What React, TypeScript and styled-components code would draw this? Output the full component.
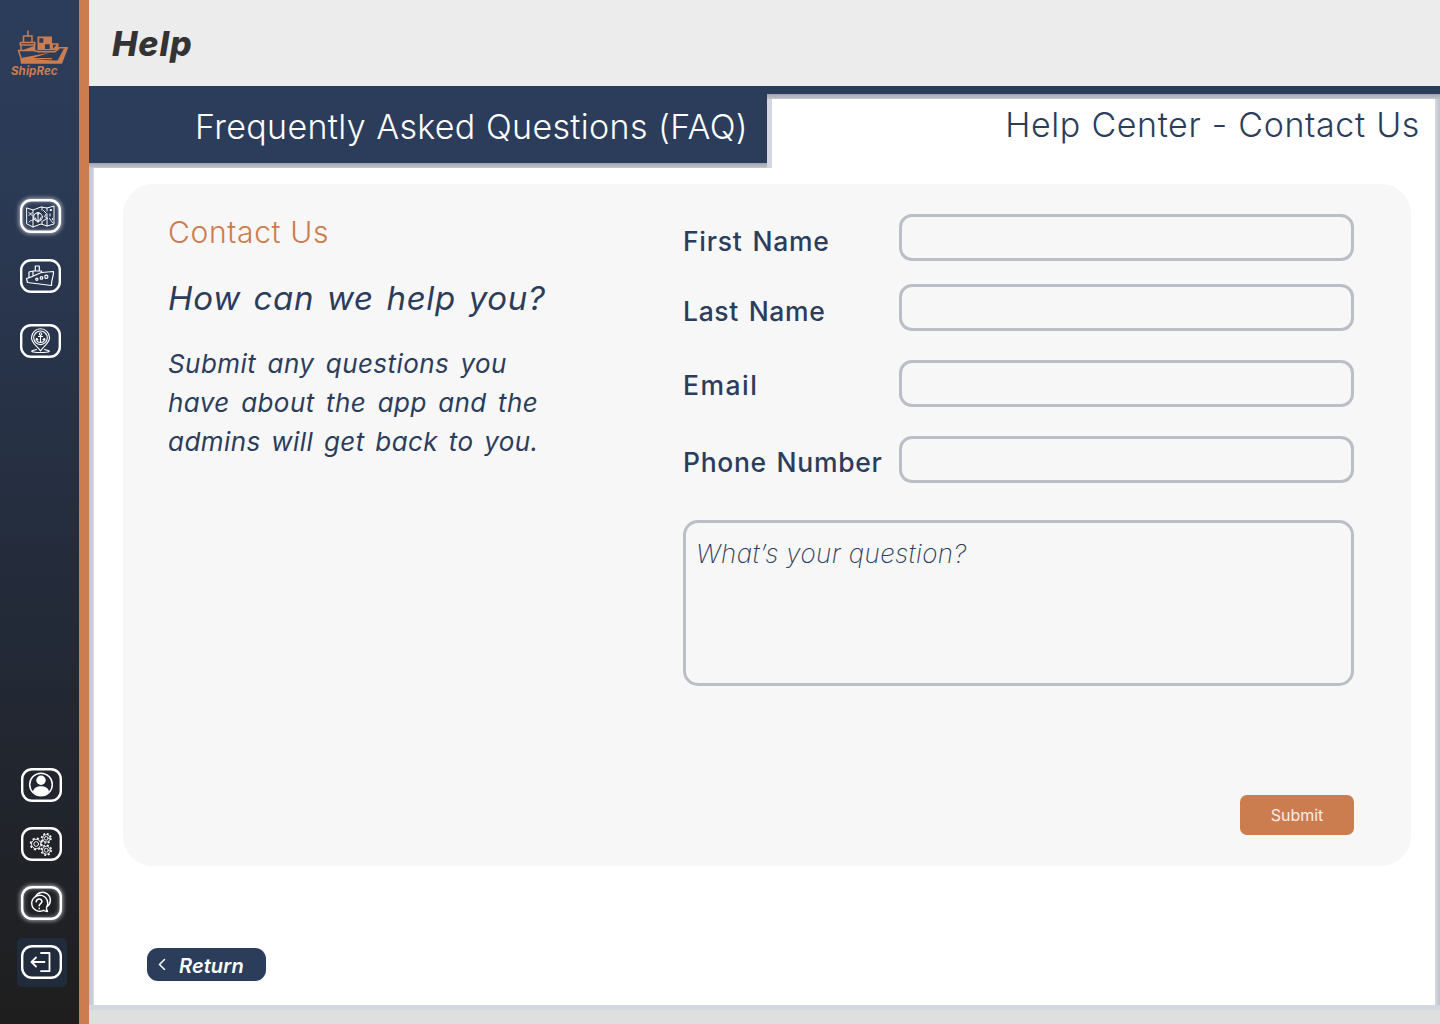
import React from 'react';
import styled, { createGlobalStyle, css } from 'styled-components';

const navy = '#2c3d5b';
const copper = '#cc7d50';
const edge = '#d4d7df';
const sans = "Inter, 'Liberation Sans', sans-serif";

const Global = createGlobalStyle`
  *, *::before, *::after { box-sizing: border-box; }
  body { margin: 0; font-family: ${sans}; color: ${navy}; }
  button, input, textarea { font-family: inherit; }
`;

const Page = styled.div`
  display: flex;
  width: 1440px;
  height: 1024px;
  overflow: hidden;
  background: #dfdfdf;
`;

const Sidebar = styled.nav`
  display: flex;
  flex-direction: column;
  flex: none;
  width: 89px;
  padding: 29px 10px 37px 11px;
  border-right: 10px solid ${copper};
  background: linear-gradient(180deg, #2c3d5b 0%, #2b3a55 18%, #232a38 60%, #1e1e1e 100%);
`;

const Brand = styled.div`
  width: 60px;
  height: 50px;
  color: ${copper};
  svg { display: block; margin-left: 6px; }
`;

const BrandName = styled.div`
  margin-top: -1px;
  font-size: 11.5px;
  line-height: 12px;
  font-weight: 700;
  font-style: italic;
  letter-spacing: 0.1px;
`;

const NavGroup = styled.div<{ $lower?: boolean }>`
  display: flex;
  flex-direction: column;
  align-items: flex-start;
  padding-left: ${p => (p.$lower ? 6 : 5)}px;
  ${p => (p.$lower ? 'margin-top: auto;' : 'margin-top: 116px;')}
`;

const NavButton = styled.button<{ $glow?: boolean; $gap?: number }>`
  display: flex;
  align-items: center;
  justify-content: center;
  width: 48px;
  height: 42px;
  padding: 0;
  margin: 0 0 ${p => p.$gap ?? 17}px;
  border: 0;
  background: none;
  color: #fff;
  span {
    display: flex;
    align-items: center;
    justify-content: center;
    width: 41px;
    height: 34px;
    border-radius: 11px;
    box-shadow: inset 0 0 0 2.4px #fff${p => p.$glow && css`, 0 0 4px 1px rgba(255, 255, 255, 0.6), inset 0 0 5px 2px rgba(255, 255, 255, 0.6)`};
  }
`;

const LogoutButton = styled(NavButton)`
  width: 50px;
  height: 49px;
  margin: -3px 0 0 0;
  padding: 0 2px 2px 0;
  border-radius: 5px;
  background: #212b3b;
`;

const Main = styled.main`
  display: flex;
  flex-direction: column;
  width: 1351px;
`;

const Header = styled.header`
  display: flex;
  align-items: center;
  height: 86px;
  padding: 1px 0 0 23px;
  background: #ececec;
`;

const Title = styled.h1`
  margin: 0;
  font-size: 34px;
  line-height: 40px;
  font-weight: 800;
  font-style: italic;
  letter-spacing: 0.9px;
  color: #333;
`;

const Tabs = styled.div`
  display: flex;
  height: 82px;
  border-top: 8px solid ${navy};
`;

const Tab = styled.button<{ $active?: boolean; $spacing: number }>`
  padding: 0;
  border: 0;
  font-size: 34px;
  line-height: 40px;
  font-weight: 300;
  text-align: right;
  white-space: nowrap;
  letter-spacing: ${p => p.$spacing}px;
  word-spacing: 0.4px;
  ${p =>
    p.$active
      ? css`
          flex: 1;
          padding: 11px 20px 23px 0;
          color: ${navy};
          background:
            linear-gradient(180deg, #a0a3ad, #c3c6cf) top / 100% 5px no-repeat,
            linear-gradient(${edge}, ${edge}) left / 5px 100% no-repeat,
            linear-gradient(90deg, #d6d9e1, #bfc2cb) right / 5px 100% no-repeat,
            #fff;
        `
      : css`
          width: 678px;
          height: 74px;
          padding: 0 19px 8px 0;
          color: #fff;
          background: linear-gradient(180deg, ${navy} 69px, #9fa3ac 69px, #c3c6ce 74px);
        `}
`;

const Content = styled.section`
  display: flex;
  flex-direction: column;
  align-items: flex-start;
  height: 842px;
  padding: 16px 24px 0 34px;
  background:
    linear-gradient(${edge}, ${edge}) bottom / 100% 5px no-repeat,
    linear-gradient(90deg, #bfc2cb, #d6d9e1) left / 5px 100% no-repeat,
    linear-gradient(90deg, #d6d9e1, #bfc2cb) right / 5px 100% no-repeat,
    #fff;
`;

const Card = styled.div`
  display: flex;
  width: 1288px;
  height: 682px;
  padding: 30px 57px 0 45px;
  border-radius: 30px;
  background: #f7f7f7;
`;

const Intro = styled.div`
  width: 515px;
  white-space: nowrap;
`;

const Eyebrow = styled.h2`
  margin: -2px 0 0;
  font-size: 30px;
  line-height: 40px;
  font-weight: 300;
  letter-spacing: 0.65px;
  color: ${copper};
`;

const Question = styled.h3`
  margin: 25px 0;
  font-size: 33px;
  line-height: 42px;
  font-weight: 400;
  font-style: italic;
  letter-spacing: 0.7px;
  word-spacing: 2.7px;
`;

const Line = styled.div<{ $word?: number }>`
  font-size: 26px;
  line-height: 39px;
  font-style: italic;
  font-weight: 400;
  letter-spacing: 0.42px;
  word-spacing: ${p => p.$word ?? 3.7}px;
`;

const Form = styled.form`
  display: flex;
  flex-direction: column;
  width: 671px;
`;

const Field = styled.label<{ $gap: number; $shift: number; $spacing: number }>`
  display: flex;
  justify-content: space-between;
  height: 47px;
  margin-bottom: ${p => p.$gap}px;
  font-size: 26.5px;
  line-height: 47px;
  font-weight: 500;
  letter-spacing: ${p => p.$spacing}px;
  word-spacing: 2px;
  white-space: nowrap;
  span { padding-top: ${p => p.$shift}px; }
`;

const Input = styled.input`
  width: 455px;
  height: 47px;
  border: 3px solid #babec7;
  border-radius: 13px;
  background: transparent;
`;

const Message = styled.textarea`
  height: 166px;
  padding: 11px 10px;
  border: 3px solid #babec7;
  border-radius: 15px;
  background: transparent;
  resize: none;
  font-size: 26px;
  line-height: 40px;
  font-weight: 200;
  font-style: italic;
  letter-spacing: 0.38px;
  &::placeholder { color: ${navy}; opacity: 1; }
`;

const Submit = styled.button`
  align-self: flex-end;
  width: 114px;
  height: 40px;
  margin-top: 109px;
  padding: 0;
  border: 0;
  border-radius: 7px;
  background: ${copper};
  color: #f7ece5;
  font-size: 16px;
`;

const Return = styled.button`
  display: flex;
  align-items: center;
  width: 119px;
  height: 33px;
  margin: 82px 0 0 24px;
  padding: 2px 0 0 11px;
  border: 0;
  border-radius: 11px;
  background: ${navy};
  color: #fff;
  font-size: 20px;
  font-weight: 600;
  font-style: italic;
  letter-spacing: 0.1px;
  svg { margin: -3px 13px 0 0; }
`;

const Icon = ({ w, h, sw = 1, children }: { w: number; h: number; sw?: number; children: React.ReactNode }) => (
  <svg width={w} height={h} viewBox={`0 0 ${w} ${h}`} fill="none" stroke="currentColor" strokeWidth={sw} strokeLinecap="round" strokeLinejoin="round">
    {children}
  </svg>
);

const LogoShip = () => (
  <Icon w={52} h={37} sw={1.5}>
    <path d="M1.500 21.500h15l5 1.200h16.500l4.300-3.900h8L44.500 34H4.500L4 29z" />
    <path d="M3.500 29H35v1.200H16L37 31.500h3.500L47 19.500l3.500-.7L44.500 34H4.500z" fill="currentColor" stroke="none" />
    <path d="M33 23.500L16 29H4z" fill="currentColor" stroke="none" />
    <path d="M3.300 16v-2.600h14.500V16zM4 16v5M17.500 16v5M6.500 13.200V7h8.500v6.200M11 7V2" />
    <path d="M6 21l11-4v4z" fill="currentColor" stroke="none" />
    <path fillRule="evenodd" d="M20.500 7.500h14.500v6.700h6.500v7h-21zM22.300 9.300v4.400h4V9.300zM28 15.300v4.700h4.700v-4.700zM36 15.700v4l3.600-4z" fill="currentColor" stroke="none" />
  </Icon>
);

const MapIcon = () => (
  <Icon w={29} h={23} sw={1}>
    <path d="M1 3l6 2 8-3 6 1 7-2v18l-7 2-6-2-8 3-6-3zM7 5v17M16 2v3M21 3v3M16 16v3M21 9v12" />
    <circle cx="12" cy="12" r="4.300" />
    <circle cx="12" cy="8.500" r="1" />
    <path d="M12 9.500v8M9.500 13c0 4 5 4 5 0M3 7.500l3 3M6 7.500l-3 3M3 17c2-3 4 0 5-4M17.500 5.500l3 3-2 3 3 2M17 16l3-2M24.500 4.500h1v1h-1zM24 9v2M23.500 13.500l3 4M26.500 13.500v1" />
  </Icon>
);

const ShipIcon = () => (
  <Icon w={30} h={24} sw={1.2}>
    <path d="M1.500 14.500c6-1 10-4.500 15-6l12-1c.5 4-2.500 8.500-2 14L2.500 18.500zM4 13.500V8l4-1v5M8 7h8.500v1.500M10.300 7V2h4v5" />
    <circle cx="11.800" cy="15.300" r="1.100" /><circle cx="16.500" cy="13.900" r="1.300" /><circle cx="21.300" cy="12.800" r="1.600" />
  </Icon>
);

const PortIcon = () => (
  <Icon w={21} h={26} sw={1.1}>
    <path d="M10.500 23C8 18.500 1.500 15.500 1.500 9.800a9 9 0 0 1 18 0c0 5.700-6.500 8.700-9 13.200z" />
    <circle cx="10.500" cy="9.800" r="6.800" />
    <circle cx="10.500" cy="6" r="1.200" />
    <path d="M10.500 7.200v7.300M8.500 8.500h4M6.500 10.500c0 5.300 8 5.300 8 0M6 12l.5-1.500 1.500 1M15 12l-.5-1.500-1.500 1M6.500 21.500c-9 2-4 3 4 3s13-1 4-3" />
  </Icon>
);

const UserIcon = () => (
  <Icon w={26} h={26} sw={1.5}>
    <circle cx="13" cy="12.500" r="11.300" />
    <circle cx="13" cy="8.300" r="4.700" fill="currentColor" stroke="none" />
    <path d="M5 19.500c1-7 15-7 16 0-4 5-12 5-16 0z" fill="currentColor" stroke="none" />
  </Icon>
);

const Gear = ({ x, y, r }: { x: number; y: number; r: number }) => (
  <g transform={`translate(${x} ${y})`}>
    <circle r={r} />
    <circle r={r * 0.5} />
    <circle r={r + 1} strokeWidth="1.500" strokeLinecap="butt" strokeDasharray={`${(r + 1) * 0.3927} ${(r + 1) * 0.3927}`} />
  </g>
);

const GearsIcon = () => (
  <Icon w={25} h={25} sw={0.9}>
    <Gear x={7.200} y={12} r={4.700} /><Gear x={17.300} y={6.300} r={3.700} /><Gear x={17.300} y={18.200} r={4} />
  </Icon>
);

const HelpIcon = () => (
  <Icon w={24} h={24} sw={1.400}>
    <path d="M6.500 5.500a7.900 7.900 0 1 1 12 9.800" />
    <path d="M14.500 19.300c1.500 1.200 2.700 1.200 4 1.200-1-1.500-1.200-2.500-1-4a8 8 0 1 0-3 2.800z" />
    <path d="M7.300 10.800c0-3.700 5.600-3.700 5.600-.3 0 2-2.700 2.200-2.700 4.300M10.200 17.300v.3" strokeWidth="1.600" />
  </Icon>
);

const LogoutIcon = () => (
  <Icon w={22} h={22} sw={1.8}>
    <path d="M11 2h8.500v18.200H11M14.500 11H1.500M6 6.500L1.500 11 6 15.500" />
  </Icon>
);

export default function App() {
  return (
    <>
      <Global />
      <Page>
        <Sidebar>
          <Brand>
            <LogoShip />
            <BrandName>ShipRec</BrandName>
          </Brand>
          <NavGroup>
            <NavButton $glow $gap={18}><span><MapIcon /></span></NavButton>
            <NavButton $gap={23}><span><ShipIcon /></span></NavButton>
            <NavButton><span><PortIcon /></span></NavButton>
          </NavGroup>
          <NavGroup $lower>
            <NavButton><span><UserIcon /></span></NavButton>
            <NavButton><span><GearsIcon /></span></NavButton>
            <NavButton $glow><span><HelpIcon /></span></NavButton>
            <LogoutButton><span><LogoutIcon /></span></LogoutButton>
          </NavGroup>
        </Sidebar>
        <Main>
          <Header><Title>Help</Title></Header>
          <Tabs>
            <Tab $spacing={0.33}>Frequently Asked Questions (FAQ)</Tab>
            <Tab $active $spacing={0.6}>Help Center - Contact Us</Tab>
          </Tabs>
          <Content>
            <Card>
              <Intro>
                <Eyebrow>Contact Us</Eyebrow>
                <Question>How can we help you?</Question>
                <Line>Submit any questions you</Line>
                <Line>have about the app and the</Line>
                <Line $word={3}>admins will get back to you.</Line>
              </Intro>
              <Form onSubmit={e => e.preventDefault()}>
                <Field $gap={23} $shift={4} $spacing={0.75}><span>First Name</span><Input /></Field>
                <Field $gap={29} $shift={4} $spacing={0.65}><span>Last Name</span><Input /></Field>
                <Field $gap={29} $shift={2} $spacing={1.5}><span>Email</span><Input /></Field>
                <Field $gap={37} $shift={3} $spacing={0.68}><span>Phone Number</span><Input /></Field>
                <Message placeholder="What’s your question?" />
                <Submit>Submit</Submit>
              </Form>
            </Card>
            <Return>
              <Icon w={8} h={12} sw={1.5}><path d="M6.500 1.500L1.500 6.500l5 5" /></Icon>
              Return
            </Return>
          </Content>
        </Main>
      </Page>
    </>
  );
}
